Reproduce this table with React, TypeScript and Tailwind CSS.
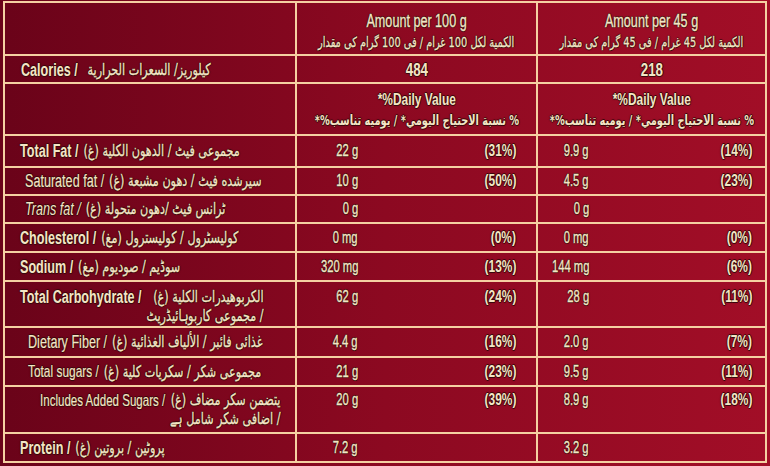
import React from 'react';

type Row = {
  en: string;
  ar: string[];
  enCls: string;
  hCls: string;
  alignCls: string;
  padCls: string;
  a1: string;
  p1: string;
  a2: string;
  p2: string;
};

const latin = "font-['Liberation_Sans','DejaVu_Sans',sans-serif]";
const arabic = "font-['DejaVu_Sans','Noto_Sans',sans-serif]";
const shadow =
  '[text-shadow:1px_0_0_#3a070b,-1px_0_0_#3a070b,0_1px_0_#3a070b,0_-1px_0_#3a070b,0_0_2px_#2a0006]';
const heavy = '[-webkit-text-stroke:0.35px_#f3e5c5]';
const light = '[-webkit-text-stroke:0.15px_#f3e5c5]';
const line = 'border-[#f5d0a2]';

const rows: Row[] = [
  { en: 'Total Fat /', ar: ['مجموعى فیٹ / الدهون الكلية (غ)'], enCls: 'font-bold text-[18px]', hCls: 'h-[32px]', alignCls: 'items-center', padCls: 'pl-[15px]', a1: '22 g', p1: '(31%)', a2: '9.9 g', p2: '(14%)' },
  { en: 'Saturated fat /', ar: ['سیرشده فیٹ / دهون مشبعة (غ)'], enCls: `font-normal text-[18px] ${light}`, hCls: 'h-[28px]', alignCls: 'items-center', padCls: 'pl-[20px]', a1: '10 g', p1: '(50%)', a2: '4.5 g', p2: '(23%)' },
  { en: 'Trans fat /', ar: ['ٹرانس فیٹ /دهون متحولة (غ)'], enCls: 'font-normal italic text-[18px]', hCls: 'h-[28px]', alignCls: 'items-center', padCls: 'pl-[20px]', a1: '0 g', p1: '', a2: '0 g', p2: '' },
  { en: 'Cholesterol /', ar: ['کولیسٹرول / كوليسترول (مغ)'], enCls: 'font-bold text-[18px]', hCls: 'h-[29px]', alignCls: 'items-center', padCls: 'pl-[15px]', a1: '0 mg', p1: '(0%)', a2: '0 mg', p2: '(0%)' },
  { en: 'Sodium /', ar: ['سوڈیم / صوديوم (مغ)'], enCls: 'font-bold text-[18px]', hCls: 'h-[29px]', alignCls: 'items-center', padCls: 'pl-[15px]', a1: '320 mg', p1: '(13%)', a2: '144 mg', p2: '(6%)' },
  { en: 'Total Carbohydrate /', ar: ['الكربوهيدرات الكلية (غ)', '/ مجموعى كاربوہائیڈریٹ'], enCls: 'font-bold text-[18px]', hCls: 'h-[46px]', alignCls: 'items-start pt-[5px]', padCls: 'pl-[15px]', a1: '62 g', p1: '(24%)', a2: '28 g', p2: '(11%)' },
  { en: 'Dietary Fiber /', ar: ['غذائی فائبر / الألياف الغذائية (غ)'], enCls: `font-normal text-[18px] ${light}`, hCls: 'h-[30px]', alignCls: 'items-center', padCls: 'pl-[23px]', a1: '4.4 g', p1: '(16%)', a2: '2.0 g', p2: '(7%)' },
  { en: 'Total sugars /', ar: ['مجموعى شکر / سكريات كلية (غ)'], enCls: `font-normal text-[17px] ${light}`, hCls: 'h-[29px]', alignCls: 'items-center', padCls: 'pl-[23px]', a1: '21 g', p1: '(23%)', a2: '9.5 g', p2: '(11%)' },
  { en: 'Includes Added Sugars /', ar: ['يتضمن سكر مضاف (غ)', '/ اضافی شکر شامل ہے'], enCls: `font-normal text-[16.5px] ${light}`, hCls: 'h-[47px]', alignCls: 'items-start pt-[3px]', padCls: 'pl-[35px]', a1: '20 g', p1: '(39%)', a2: '8.9 g', p2: '(18%)' },
];

// the artwork uses a narrow face, so squeeze a regular one
const Cond = ({ children, origin, className = '' }: { children: React.ReactNode; origin: string; className?: string }) => (
  <span className={`inline-block shrink-0 whitespace-nowrap scale-x-70 ${origin} ${className}`}>{children}</span>
);

const Amounts = ({ amount, pct, first, alignCls }: { amount: string; pct: string; first: boolean; alignCls: string }) => (
  <div className={`flex h-full ${alignCls} ${first ? `border-r-2 ${line}` : ''}`}>
    <span className={`${first ? 'w-[61px]' : 'w-[51px]'} flex justify-end shrink-0`}>
      <Cond origin="origin-right" className={`text-[16px] leading-[20px] ${heavy}`}>{amount}</Cond>
    </span>
    <span className={`flex-1 flex justify-end ${first ? 'pr-[20px]' : 'pr-[13px]'}`}>
      <Cond origin="origin-right" className="text-[17px] font-bold leading-[20px]">{pct}</Cond>
    </span>
  </div>
);

const Label = ({ en, ar, enCls, gapCls = 'gap-[7px]' }: { en: string; ar: string[]; enCls: string; gapCls?: string }) => (
  <div className={`flex items-start w-max shrink-0 whitespace-nowrap scale-x-70 origin-left ${gapCls}`}>
    <span className={`leading-[20px] ${enCls}`}>{en}</span>
    <div className="flex flex-col items-end">
      {ar.map((t) => (
        <span key={t} dir="rtl" className={`${arabic} text-[16px] leading-[19px] [-webkit-text-stroke:0.3px_#f3e5c5]`}>{t}</span>
      ))}
    </div>
  </div>
);

export default function App() {
  return (
    <div className={`w-[770px] h-[466px] overflow-hidden bg-linear-to-r from-[#6a0319] via-[#8c0921] to-[#a20e27] pt-px pl-[3px] text-[#f3e5c5] ${latin} ${shadow}`}>
      <div className={`w-[764px] border-2 ${line}`}>
        {/* header */}
        <div className={`grid grid-cols-[292px_241px_227px] h-[53px] border-b-2 ${line}`}>
          <div className={`border-r-2 ${line}`} />
          {['100', '45'].map((q, i) => (
            <div key={q} className={`flex flex-col items-center pt-[8px] ${i === 0 ? `border-r-2 ${line}` : ''}`}>
              <Cond origin="origin-center" className={`text-[18px] leading-[20px] ${heavy}`}>Amount per {q} g</Cond>
              <Cond origin="origin-center" className={`${arabic} text-[14px] leading-[22px] [-webkit-text-stroke:0.3px_#f3e5c5]`}>
                <span dir="rtl">الكمية لكل {q} غرام / فی {q} گرام کی مقدار</span>
              </Cond>
            </div>
          ))}
        </div>

        {/* calories */}
        <div className={`grid grid-cols-[292px_241px_227px] h-[28px] border-b-2 ${line}`}>
          <div className={`flex items-center h-full pl-[16px] border-r-2 ${line}`}>
            <Label en="Calories /" ar={['كيلوريز/ السعرات الحرارية']} enCls="font-bold text-[18px]" gapCls="gap-[14px]" />
          </div>
          <div className={`h-full flex items-center justify-center border-r-2 ${line}`}>
            <Cond origin="origin-center" className="text-[19px] font-bold">484</Cond>
          </div>
          <div className="h-full flex items-center justify-center">
            <Cond origin="origin-center" className="text-[19px] font-bold">218</Cond>
          </div>
        </div>

        {/* daily value */}
        <div className={`grid grid-cols-[292px_241px_227px] h-[52px] border-b-2 ${line}`}>
          <div className={`border-r-2 ${line}`} />
          {[0, 1].map((i) => (
            <div key={i} className={`flex flex-col items-center pt-[6px] ${i === 0 ? `border-r-2 ${line}` : ''}`}>
              <Cond origin="origin-center" className="text-[17px] font-bold leading-[20px]">*%Daily Value</Cond>
              <Cond origin="origin-center" className={`${arabic} text-[14px] font-bold leading-[20px]`}>
                <span dir="rtl">% نسبة الاحتياج اليومي* / يوميه تناسب%*</span>
              </Cond>
            </div>
          ))}
        </div>

        {rows.map((r) => (
          <div key={r.en} className={`grid grid-cols-[292px_241px_227px] border-b-2 ${line} ${r.hCls}`}>
            <div className={`flex h-full border-r-2 ${line} ${r.padCls} ${r.alignCls}`}>
              <Label en={r.en} ar={r.ar} enCls={r.enCls} />
            </div>
            <Amounts amount={r.a1} pct={r.p1} first alignCls={r.alignCls} />
            <Amounts amount={r.a2} pct={r.p2} first={false} alignCls={r.alignCls} />
          </div>
        ))}

        {/* protein */}
        <div className="grid grid-cols-[292px_241px_227px] h-[27px]">
          <div className={`flex items-center h-full pl-[15px] border-r-2 ${line}`}>
            <Label en="Protein /" ar={['پروٹین / بروتين (غ)']} enCls="font-bold text-[18px]" />
          </div>
          <Amounts amount="7.2 g" pct="" first alignCls="items-center" />
          <Amounts amount="3.2 g" pct="" first={false} alignCls="items-center" />
        </div>
      </div>
    </div>
  );
}
